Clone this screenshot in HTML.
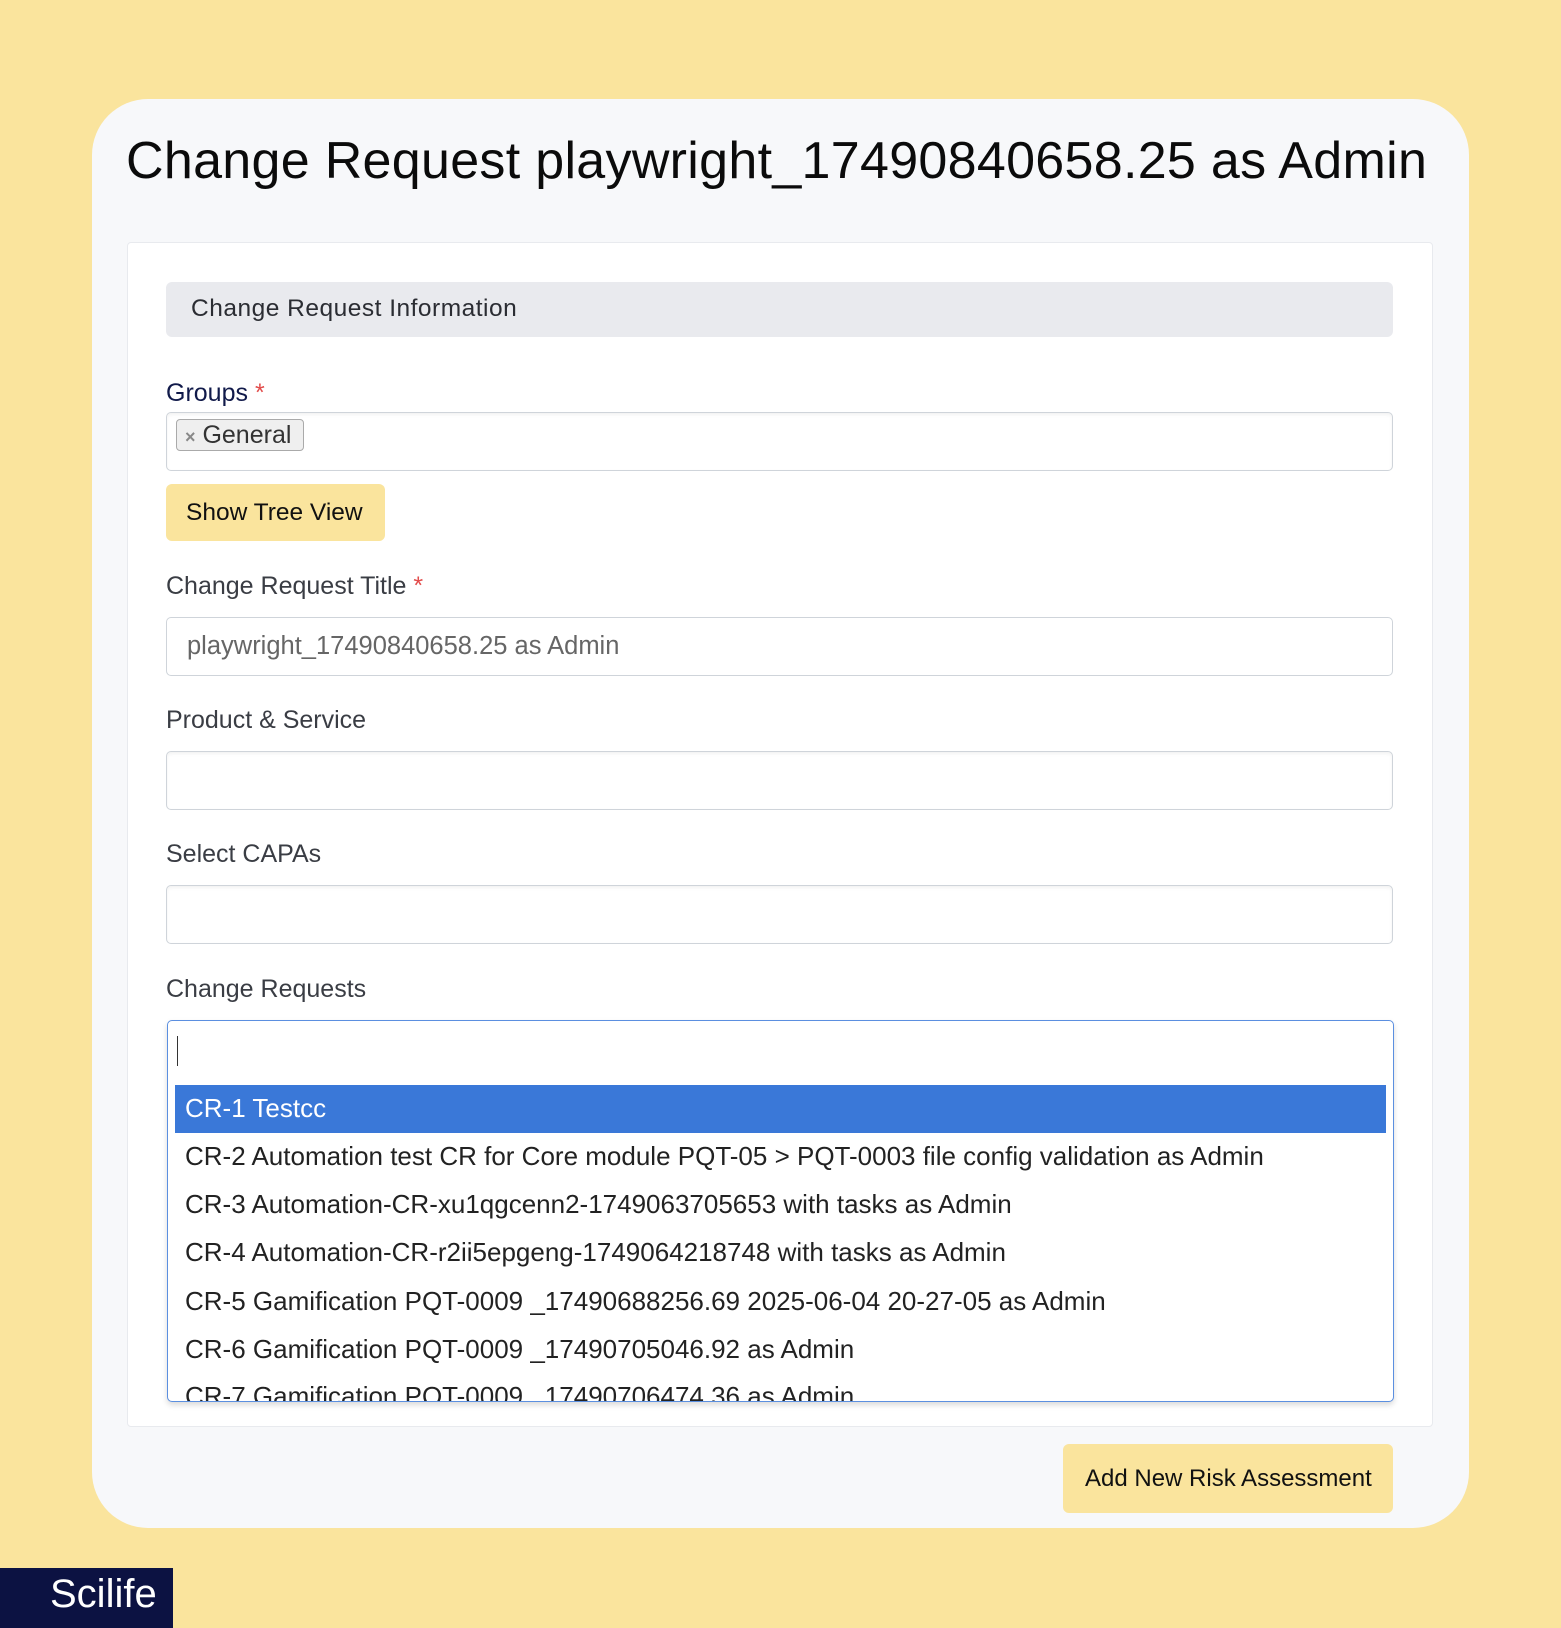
<!DOCTYPE html>
<html><head><meta charset="utf-8"><style>
*{box-sizing:border-box;margin:0;padding:0}
body{width:1561px;height:1628px;background:#fae49d;font-family:"Liberation Sans",sans-serif;position:relative;overflow:hidden;color:#222}
.panel{position:absolute;left:92px;top:99px;width:1377px;height:1429px;background:#f7f8fa;border-radius:56px}
.title{position:absolute;left:126px;top:131px;font-size:52px;color:#0b0b0b;white-space:nowrap;letter-spacing:0.3px}
.card{position:absolute;left:127px;top:242px;width:1306px;height:1185px;background:#fff;border:1px solid #e8eaee;border-radius:4px}
.abs{position:absolute}
.hdr{left:166px;top:282px;width:1227px;height:55px;background:#e9eaee;border-radius:6px;font-size:24.5px;letter-spacing:0.5px;color:#2b2d33;padding:13px 0 0 25px}
.lbl{font-size:25px;color:#3a3d44;left:166px}
.inp{left:166px;width:1227px;height:59px;border:1px solid #cfd4da;border-radius:5px;background:#fff;box-shadow:inset 0 2px 3px rgba(0,0,0,0.05)}
.star{color:#e24c4b}
.btn{background:#fae49d;border-radius:6px;font-size:24px;color:#111}
.opt{left:185px;font-size:26px;color:#222;white-space:nowrap}
</style></head><body>
<div class="panel"></div>
<div class="title">Change Request playwright_17490840658.25 as Admin</div>
<div class="card"></div>
<div class="abs hdr">Change Request Information</div>
<div class="abs lbl" style="top:379px;color:#111a4a">Groups <span class="star">*</span></div>
<div class="abs inp" style="top:412px"></div>
<div class="abs" style="left:176px;top:419px;height:32px;width:128px;border:1px solid #aaa;border-radius:4px;background:#efefef;font-size:25px;color:#333;padding:1px 0 0 8px"><span style="color:#888;font-size:18px;font-weight:bold">×</span> General</div>
<div class="abs btn" style="left:166px;top:484px;width:219px;height:57px;padding:15px 0 0 20px;font-size:24.5px">Show Tree View</div>
<div class="abs lbl" style="top:572px">Change Request Title <span class="star">*</span></div>
<div class="abs inp" style="top:617px;box-shadow:none;color:#666;font-size:25.5px;padding:14px 0 0 20px">playwright_17490840658.25 as Admin</div>
<div class="abs lbl" style="top:706px">Product &amp; Service</div>
<div class="abs inp" style="top:751px"></div>
<div class="abs lbl" style="top:840px">Select CAPAs</div>
<div class="abs inp" style="top:885px"></div>
<div class="abs lbl" style="top:975px">Change Requests</div>
<div class="abs" style="left:167px;top:1020px;width:1227px;height:382px;border:1px solid #5b8fe0;border-radius:5px;background:#fff;box-shadow:0 3px 6px rgba(0,0,0,0.15);overflow:hidden">
  <div class="abs" style="left:9px;top:15px;width:1px;height:30px;background:#333"></div>
  <div class="abs" style="left:7px;top:64px;width:1211px;height:48px;background:#3a78d8"></div>
</div>
<div class="abs opt" style="top:1093px;color:#fff">CR-1 Testcc</div>
<div class="abs opt" style="top:1141px">CR-2 Automation test CR for Core module PQT-05 &gt; PQT-0003 file config validation as Admin</div>
<div class="abs opt" style="top:1189px">CR-3 Automation-CR-xu1qgcenn2-1749063705653 with tasks as Admin</div>
<div class="abs opt" style="top:1237px">CR-4 Automation-CR-r2ii5epgeng-1749064218748 with tasks as Admin</div>
<div class="abs opt" style="top:1286px">CR-5 Gamification PQT-0009 _17490688256.69 2025-06-04 20-27-05 as Admin</div>
<div class="abs opt" style="top:1334px">CR-6 Gamification PQT-0009 _17490705046.92 as Admin</div>
<div class="abs" style="left:168px;top:1383px;width:1225px;height:18px;overflow:hidden"><div class="abs opt" style="left:17px;top:-2px">CR-7 Gamification PQT-0009 _17490706474.36 as Admin</div></div>
<div class="abs btn" style="left:1063px;top:1444px;width:330px;height:69px;padding:21px 0 0 22px">Add New Risk Assessment</div>
<div class="abs" style="left:0;top:1568px;width:173px;height:60px;background:#0c1242;color:#fff;font-size:40px;padding:4px 0 0 50px">Scilife</div>
</body></html>
